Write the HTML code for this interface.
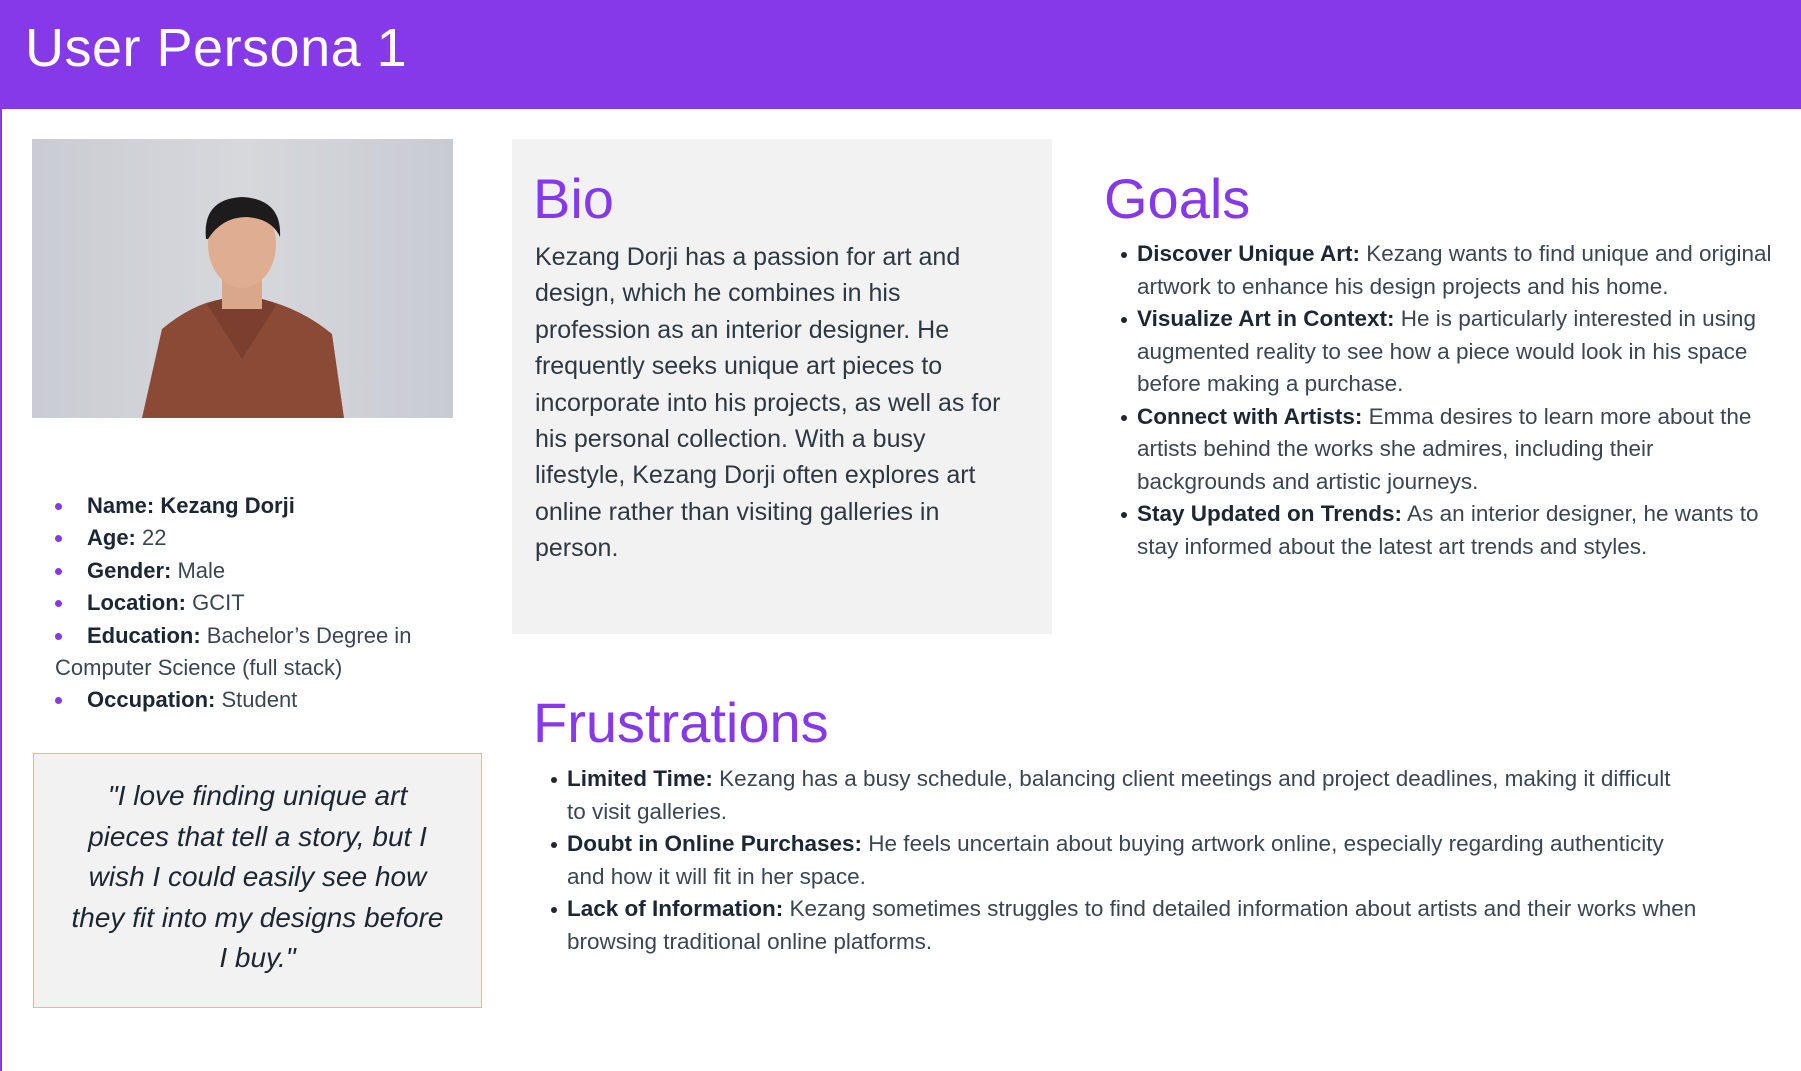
<!DOCTYPE html>
<html><head><meta charset="utf-8"><style>
*{margin:0;padding:0;box-sizing:border-box}
body{width:1801px;height:1071px;background:#fff;font-family:"Liberation Sans",sans-serif;color:#3b4652;position:relative;overflow:hidden}
.hdr{position:absolute;left:0;top:0;width:1801px;height:109px;background:#8639e9}
.hdr h1{position:absolute;left:25px;top:17px;font-size:54px;font-weight:normal;color:#fff;letter-spacing:0.5px}
.lb{position:absolute;left:0;top:109px;width:2px;height:962px;background:#8639e9}
.photo{position:absolute;left:32px;top:139px;width:421px;height:279px;background:linear-gradient(90deg,#c9ccd2,#d6d8dc 50%,#c8cbd2);overflow:hidden}
.abs{position:absolute;white-space:nowrap}
.info{left:55px;top:490px;font-size:22px;line-height:32.4px}
.info div{position:relative;padding-left:32px}
.info div.d::before{content:"";position:absolute;left:0;top:13px;width:7px;height:7px;border-radius:50%;background:#8639e9}
b{color:#1c2733;font-weight:bold}
.quote{position:absolute;left:33px;top:753px;width:449px;height:255px;background:#f2f2f2;border:1px solid #8fd3f0;text-align:center;font-style:italic;font-size:28px;line-height:40.5px;color:#1c2733;padding-top:22px}
.bio{position:absolute;left:512px;top:139px;width:540px;height:495px;background:#f2f2f2}
.h2{position:absolute;font-size:56px;color:#8639e9;font-weight:normal}
.biot{left:535px;top:239px;font-size:25px;line-height:36.4px;color:#2d3843}
.ul{font-size:22.5px;line-height:32.5px}
.ul div{position:relative}
.ul div.d::before{content:"";position:absolute;left:-16px;top:14px;width:6px;height:6px;border-radius:50%;background:#1c2733}
</style></head><body>
<div class="hdr"><h1>User Persona 1</h1></div>
<div class="lb"></div>
<div class="photo">
<svg width="421" height="279" viewBox="0 0 421 279">
<path d="M110 279 L130 190 Q160 165 190 160 L230 160 Q270 170 300 195 L312 279Z" fill="#8a4a36"/>
<path d="M175 165 L210 220 L245 165 L230 160 L190 160Z" fill="#7a3f2e"/>
<rect x="190" y="125" width="40" height="45" fill="#d9a88a"/>
<ellipse cx="210" cy="105" rx="34" ry="44" fill="#dfae90"/>
<path d="M174 100 Q170 60 210 58 Q250 60 248 98 Q240 80 215 78 Q190 78 176 100Z" fill="#1d1b1c"/>
</svg>
</div>
<div class="abs info">
<div class="d"><b>Name: Kezang Dorji</b></div>
<div class="d"><b>Age:</b> 22</div>
<div class="d"><b>Gender:</b> Male</div>
<div class="d"><b>Location:</b> GCIT</div>
<div class="d"><b>Education:</b> Bachelor’s Degree in</div>
<div style="padding-left:0">Computer Science (full stack)</div>
<div class="d"><b>Occupation:</b> Student</div>
</div>
<div class="quote">"I love finding unique art<br>pieces that tell a story, but I<br>wish I could easily see how<br>they fit into my designs before<br>I buy."</div>
<div class="bio"></div>
<div class="h2" style="left:533px;top:166px">Bio</div>
<div class="abs biot">Kezang Dorji has a passion for art and<br>design, which he combines in his<br>profession as an interior designer. He<br>frequently seeks unique art pieces to<br>incorporate into his projects, as well as for<br>his personal collection. With a busy<br>lifestyle, Kezang Dorji often explores art<br>online rather than visiting galleries in<br>person.</div>
<div class="h2" style="left:1104px;top:166px">Goals</div>
<div class="abs ul" style="left:1137px;top:238px">
<div class="d"><b>Discover Unique Art:</b> Kezang wants to find unique and original</div>
<div>artwork to enhance his design projects and his home.</div>
<div class="d"><b>Visualize Art in Context:</b> He is particularly interested in using</div>
<div>augmented reality to see how a piece would look in his space</div>
<div>before making a purchase.</div>
<div class="d"><b>Connect with Artists:</b> Emma desires to learn more about the</div>
<div>artists behind the works she admires, including their</div>
<div>backgrounds and artistic journeys.</div>
<div class="d"><b>Stay Updated on Trends:</b> As an interior designer, he wants to</div>
<div>stay informed about the latest art trends and styles.</div>
</div>
<div class="h2" style="left:533px;top:690px">Frustrations</div>
<div class="abs ul" style="left:567px;top:763px">
<div class="d"><b>Limited Time:</b> Kezang has a busy schedule, balancing client meetings and project deadlines, making it difficult</div>
<div>to visit galleries.</div>
<div class="d"><b>Doubt in Online Purchases:</b> He feels uncertain about buying artwork online, especially regarding authenticity</div>
<div>and how it will fit in her space.</div>
<div class="d"><b>Lack of Information:</b> Kezang sometimes struggles to find detailed information about artists and their works when</div>
<div>browsing traditional online platforms.</div>
</div>
</body></html>
